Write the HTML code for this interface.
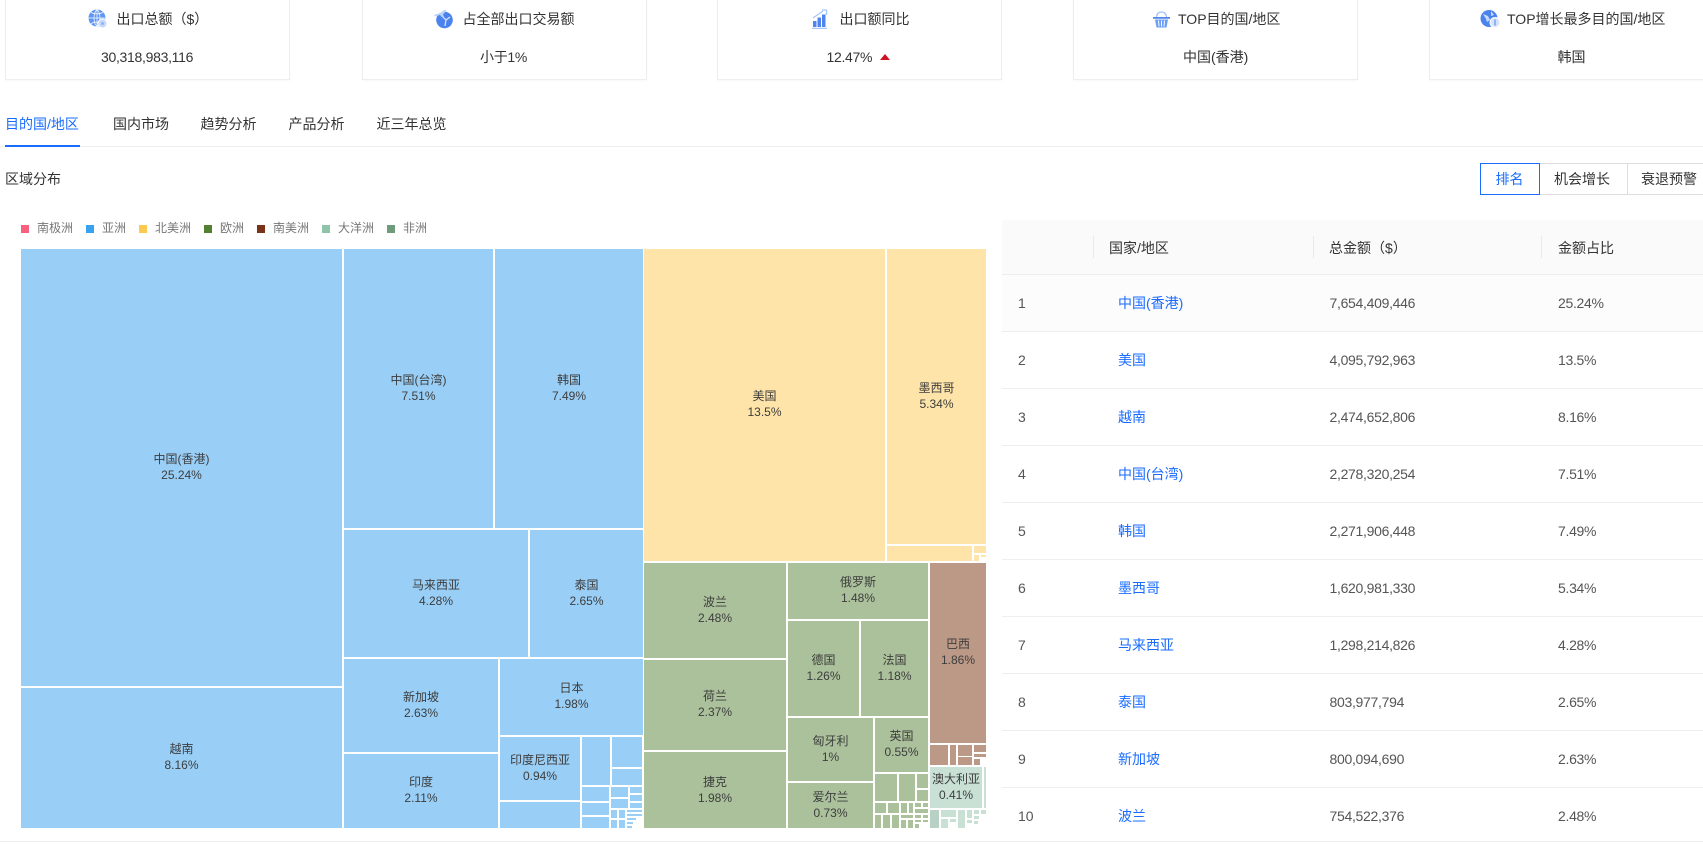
<!DOCTYPE html>
<html lang="zh"><head><meta charset="utf-8"><title>出口总览</title>
<style>
html,body{margin:0;padding:0;background:#fff}
body{width:1703px;height:842px;position:relative;overflow:hidden;font:14px/20px "Liberation Sans","Noto Sans CJK SC",sans-serif;color:#333}
.a{position:absolute;white-space:nowrap}
.n{letter-spacing:-.3px}
.card{position:absolute;top:-10px;height:88px;width:283px;border:1px solid #eee;box-shadow:0 1px 2px rgba(0,0,0,.03);background:#fff}
.b{position:absolute;top:163px;height:30px;border:1px solid #ddd;box-sizing:content-box;background:#fff}
.t{position:absolute;box-sizing:border-box;padding-bottom:2px;display:flex;flex-direction:column;align-items:center;justify-content:center;font-size:12px;line-height:16px;color:#3d3d3d;white-space:nowrap;overflow:hidden}
.as{background:#99cff7}.na{background:#fee4a8}.eu{background:#abc19b}.sa{background:#bc9987}.oc{background:#c8e1d4}
.l{position:absolute;top:225px;width:8px;height:8px}
.lt{position:absolute;top:219px;font-size:12px;line-height:18px;color:#777;white-space:nowrap}
.r{position:absolute;left:1002px;width:701px;height:56px;border-bottom:1px solid #eee}
.r span{position:absolute;top:18px;line-height:20px;white-space:nowrap;color:#555}
.r .k{left:16px}.r .c{left:116px;color:#1a6cff}.r .m{left:327.500px;letter-spacing:-.3px}.r .p{left:556px;letter-spacing:-.3px}
</style></head><body>

<div class="card" style="left:5px"></div>
<div class="card" style="left:362px"></div>
<div class="card" style="left:717px"></div>
<div class="card" style="left:1073px"></div>
<div class="card" style="left:1429px"></div>

<svg class="a" style="left:88px;top:9px" width="20" height="20" viewBox="0 0 20 20"><circle cx="9" cy="9" r="8.500" fill="#5f95f3"/><path d="M.5 9h17M9 .5v17M3 3.500c4 2 8 2 12 0M3 14.500c4-2 8-2 12 0M9 .5C5 4 5 14 9 17.500M9 .5c4 3.500 4 13.500 0 17" stroke="#fff" stroke-width=".7" fill="none"/><circle cx="14.500" cy="14.500" r="4.500" fill="#c4d9fb" stroke="#fff"/><circle cx="14.500" cy="14.500" r="1.500" fill="#8fb5f8"/></svg>
<div class="a" style="left:116.500px;top:9px">出口总额（$）</div>
<div class="a n" style="left:101px;top:47px">30,318,983,116</div>

<svg class="a" style="left:434px;top:9px" width="20" height="20" viewBox="0 0 20 20"><circle cx="10.500" cy="11" r="8.300" fill="#4a82ee"/><path d="M9 8l3 3-1 6M12 11l4-3" stroke="#dfe9fd" stroke-width="1.200" fill="none"/><path d="M0 6l6-2 5-3.500 1.500 1L9 5.500l1 2.500-2.200.2L6 6 1 7.500z" fill="#bcd3fa"/></svg>
<div class="a" style="left:462.500px;top:9px">占全部出口交易额</div>
<div class="a n" style="left:480px;top:47px">小于1%</div>

<svg class="a" style="left:811px;top:9px" width="20" height="20" viewBox="0 0 20 20"><path d="M2 12h3.500v6H2zM6.500 8.500H10V18H6.500zM11 5.500h3.500V18H11z" fill="#4f86ee"/><path d="M1 19.500h15" stroke="#a9c6fa" stroke-width="1.500"/><path d="M2 9l10-7" stroke="#a9c6fa" stroke-width="1.300" fill="none"/><path d="M15.500 6V1H11" stroke="#a9c6fa" stroke-width="1.300" fill="none"/></svg>
<div class="a" style="left:839.500px;top:9px">出口额同比</div>
<div class="a n" style="left:826.500px;top:47px">12.47%</div>
<div class="a" style="left:880px;top:54px;width:0;height:0;border-left:5px solid transparent;border-right:5px solid transparent;border-bottom:6px solid #cf1322"></div>

<svg class="a" style="left:1152px;top:11px" width="19" height="17" viewBox="0 0 19 17"><path d="M4.500 6C5 2 7 1 9.500 1s4.500 1 5 5" stroke="#9fbff8" stroke-width="1.200" fill="none"/><path d="M1 6h17v1.800H1z" fill="#4f86ee"/><path d="M3 8.500h13l-1.500 8h-10z" fill="#6d9ef5"/><path d="M6.500 9.500l.5 6M9.500 9.500v6M12.500 9.500l-.5 6" stroke="#fff" stroke-width="1"/></svg>
<div class="a" style="left:1178px;top:9px">TOP目的国/地区</div>
<div class="a" style="left:1183px;top:47px">中国(香港)</div>

<svg class="a" style="left:1480px;top:9px" width="21" height="20" viewBox="0 0 21 20"><circle cx="9" cy="9.500" r="8.500" fill="#4a82ee"/><path d="M3 5l5 2 2 4-3 2-1-3zM11 2l3 4-3 1z" fill="#c7dafb"/><circle cx="15" cy="13.500" r="5" fill="#d5e3fc" stroke="#fff"/><path d="M15 10.500v6" stroke="#6d9ef5" stroke-width="1.400"/></svg>
<div class="a" style="left:1507px;top:9px">TOP增长最多目的国/地区</div>
<div class="a" style="left:1557.500px;top:47px">韩国</div>

<!-- tabs -->
<div class="a" style="left:0;top:146px;width:1703px;height:1px;background:#eee"></div>
<div class="a" style="left:5px;top:145px;width:75px;height:2px;background:#1a6cff"></div>
<div class="a" style="left:5px;top:114px;color:#1a6cff">目的国/地区</div>
<div class="a" style="left:113px;top:114px">国内市场</div>
<div class="a" style="left:200.500px;top:114px">趋势分析</div>
<div class="a" style="left:288.500px;top:114px">产品分析</div>
<div class="a" style="left:376.500px;top:114px">近三年总览</div>

<div class="a" style="left:5px;top:169px">区域分布</div>
<div class="b" style="left:1590px;width:130px"></div>
<div class="b" style="left:1539px;width:87px"></div>
<div class="b" style="left:1480px;width:58px;border-color:#1a6cff"></div>
<div class="a" style="left:1495.500px;top:169px;color:#1a6cff">排名</div>
<div class="a" style="left:1554px;top:169px">机会增长</div>
<div class="a" style="left:1641px;top:169px">衰退预警</div>

<!-- legend -->
<div class="l" style="left:21px;background:#f7617f"></div><div class="lt" style="left:37px">南极洲</div>
<div class="l" style="left:85.500px;background:#37a2f0"></div><div class="lt" style="left:102px">亚洲</div>
<div class="l" style="left:139px;background:#fdc94f"></div><div class="lt" style="left:155px">北美洲</div>
<div class="l" style="left:204px;background:#558034"></div><div class="lt" style="left:220px">欧洲</div>
<div class="l" style="left:257px;background:#7a3319"></div><div class="lt" style="left:273px">南美洲</div>
<div class="l" style="left:322px;background:#90c4a9"></div><div class="lt" style="left:338px">大洋洲</div>
<div class="l" style="left:387px;background:#6d9b7b"></div><div class="lt" style="left:403px">非洲</div>

<!-- treemap -->
<div class="t as" style="left:21px;top:249px;width:321px;height:437px">中国(香港)<span>25.24%</span></div>
<div class="t as" style="left:21px;top:688px;width:321px;height:140px">越南<span>8.16%</span></div>
<div class="t as" style="left:344px;top:249px;width:149px;height:279px">中国(台湾)<span>7.51%</span></div>
<div class="t as" style="left:495px;top:249px;width:148px;height:279px">韩国<span>7.49%</span></div>
<div class="t as" style="left:344px;top:530px;width:184px;height:127px">马来西亚<span>4.28%</span></div>
<div class="t as" style="left:530px;top:530px;width:113px;height:127px">泰国<span>2.65%</span></div>
<div class="t as" style="left:344px;top:659px;width:154px;height:93px">新加坡<span>2.63%</span></div>
<div class="t as" style="left:344px;top:754px;width:154px;height:74px">印度<span>2.11%</span></div>
<div class="t as" style="left:500px;top:659px;width:143px;height:76px">日本<span>1.98%</span></div>
<div class="t as" style="left:500px;top:737px;width:80px;height:63px">印度尼西亚<span>0.94%</span></div>
<div class="t na" style="left:644px;top:249px;width:241px;height:312px">美国<span>13.5%</span></div>
<div class="t na" style="left:887px;top:249px;width:99px;height:295px">墨西哥<span>5.34%</span></div>
<div class="t eu" style="left:644px;top:563px;width:142px;height:95px">波兰<span>2.48%</span></div>
<div class="t eu" style="left:644px;top:660px;width:142px;height:90px">荷兰<span>2.37%</span></div>
<div class="t eu" style="left:644px;top:752px;width:142px;height:76px;padding-bottom:0">捷克<span>1.98%</span></div>
<div class="t eu" style="left:788px;top:563px;width:140px;height:56px">俄罗斯<span>1.48%</span></div>
<div class="t eu" style="left:788px;top:621px;width:71px;height:95px">德国<span>1.26%</span></div>
<div class="t eu" style="left:861px;top:621px;width:67px;height:95px">法国<span>1.18%</span></div>
<div class="t eu" style="left:788px;top:718px;width:85px;height:63px">匈牙利<span>1%</span></div>
<div class="t eu" style="left:875px;top:718px;width:53px;height:54px">英国<span>0.55%</span></div>
<div class="t eu" style="left:788px;top:783px;width:85px;height:45px">爱尔兰<span>0.73%</span></div>
<div class="t sa" style="left:930px;top:563px;width:56px;height:180px">巴西<span>1.86%</span></div>
<div class="t oc" style="left:930px;top:767px;width:52px;height:41px">澳大利亚<span>0.41%</span></div>

<svg class="a" style="left:0;top:0" width="1000" height="842">
<g fill="#99cff7">
<rect x="500" y="802" width="80" height="26"/>
<rect x="582" y="737" width="28" height="48"/>
<rect x="612" y="737" width="30" height="30"/>
<rect x="612" y="769" width="30" height="16"/>
<rect x="582" y="787" width="27" height="14"/>
<rect x="582" y="803" width="27" height="12"/>
<rect x="582" y="817" width="27" height="11"/>
<rect x="611" y="787" width="17" height="10"/>
<rect x="611" y="799" width="17" height="9"/>
<rect x="630" y="787" width="12" height="6"/>
<rect x="630" y="795" width="12" height="6"/>
<rect x="630" y="803" width="12" height="5"/>
<rect x="611" y="810" width="6" height="8"/>
<rect x="611" y="820" width="6" height="8"/>
<rect x="619" y="810" width="6" height="8"/>
<rect x="619" y="820" width="6" height="8"/>
<rect x="627" y="810" width="15" height="2"/>
<rect x="627" y="814" width="15" height="2"/>
<rect x="627" y="818" width="9" height="2"/>
<rect x="627" y="822" width="6" height="2"/>
<rect x="627" y="826" width="5" height="2"/>
</g>
<g fill="#fee4a8">
<rect x="887" y="546" width="85" height="15"/>
<rect x="974" y="546" width="12" height="7"/>
<rect x="974" y="555" width="5" height="6"/>
<rect x="981" y="555" width="5" height="2"/>
</g>
<g fill="#abc19b">
<rect x="875" y="774" width="22" height="27"/>
<rect x="899" y="774" width="16" height="27"/>
<rect x="917" y="774" width="11" height="14"/>
<rect x="917" y="790" width="11" height="11"/>
<rect x="875" y="803" width="11" height="10"/>
<rect x="888" y="803" width="11" height="10"/>
<rect x="901" y="803" width="6" height="10"/>
<rect x="909" y="803" width="4" height="10"/>
<rect x="915" y="803" width="6" height="4"/>
<rect x="923" y="803" width="5" height="4"/>
<rect x="915" y="809" width="13" height="4"/>
<rect x="875" y="815" width="6" height="13"/>
<rect x="883" y="815" width="7" height="13"/>
<rect x="892" y="815" width="7" height="13"/>
<rect x="901" y="815" width="12" height="3"/>
<rect x="901" y="820" width="5" height="8"/>
<rect x="908" y="820" width="5" height="8"/>
<rect x="915" y="815" width="6" height="3"/>
<rect x="923" y="815" width="5" height="3"/>
<rect x="915" y="820" width="6" height="2"/>
<rect x="923" y="820" width="5" height="2"/>
<rect x="915" y="824" width="4" height="4"/>
</g>
<g fill="#bc9987">
<rect x="930" y="745" width="18" height="20"/>
<rect x="950" y="745" width="6" height="20"/>
<rect x="958" y="745" width="14" height="11"/>
<rect x="958" y="757" width="14" height="8"/>
<rect x="974" y="745" width="12" height="7"/>
<rect x="974" y="754" width="12" height="3"/>
<rect x="974" y="759" width="6" height="6"/>
</g>
<g fill="#c8e1d4">
<rect x="984" y="767" width="2" height="41"/>
<rect x="941" y="810" width="15" height="7"/>
<rect x="941" y="819" width="7" height="9"/>
<rect x="950" y="819" width="6" height="3"/>
<rect x="958" y="810" width="7" height="18"/>
<rect x="967" y="810" width="5" height="8"/>
<rect x="974" y="810" width="5" height="4"/>
<rect x="981" y="810" width="5" height="4"/>
<rect x="974" y="816" width="5" height="3"/>
<rect x="967" y="820" width="5" height="3"/>
<rect x="974" y="821" width="4" height="3"/>
</g>
<rect x="930" y="810" width="9" height="18" fill="#b9d0c4"/>
</svg>

<!-- table -->
<div class="a" style="left:1002px;top:220px;width:701px;height:54px;background:#fafafa;border-bottom:1px solid #eee"></div>
<div class="a" style="left:1093px;top:236px;width:1px;height:22px;background:#eaeaea"></div>
<div class="a" style="left:1313px;top:236px;width:1px;height:22px;background:#eaeaea"></div>
<div class="a" style="left:1541px;top:236px;width:1px;height:22px;background:#eaeaea"></div>
<div class="a" style="left:1109px;top:238px">国家/地区</div>
<div class="a" style="left:1329px;top:238px">总金额（$）</div>
<div class="a" style="left:1558px;top:238px">金额占比</div>

<div class="r" style="top:275px;background:#fcfcfc"><span class="k">1</span><span class="c">中国(香港)</span><span class="m">7,654,409,446</span><span class="p">25.24%</span></div>
<div class="r" style="top:332px"><span class="k">2</span><span class="c">美国</span><span class="m">4,095,792,963</span><span class="p">13.5%</span></div>
<div class="r" style="top:389px"><span class="k">3</span><span class="c">越南</span><span class="m">2,474,652,806</span><span class="p">8.16%</span></div>
<div class="r" style="top:446px"><span class="k">4</span><span class="c">中国(台湾)</span><span class="m">2,278,320,254</span><span class="p">7.51%</span></div>
<div class="r" style="top:503px"><span class="k">5</span><span class="c">韩国</span><span class="m">2,271,906,448</span><span class="p">7.49%</span></div>
<div class="r" style="top:560px"><span class="k">6</span><span class="c">墨西哥</span><span class="m">1,620,981,330</span><span class="p">5.34%</span></div>
<div class="r" style="top:617px"><span class="k">7</span><span class="c">马来西亚</span><span class="m">1,298,214,826</span><span class="p">4.28%</span></div>
<div class="r" style="top:674px"><span class="k">8</span><span class="c">泰国</span><span class="m">803,977,794</span><span class="p">2.65%</span></div>
<div class="r" style="top:731px"><span class="k">9</span><span class="c">新加坡</span><span class="m">800,094,690</span><span class="p">2.63%</span></div>
<div class="r" style="top:788px;border:0"><span class="k">10</span><span class="c">波兰</span><span class="m">754,522,376</span><span class="p">2.48%</span></div>

<div class="a" style="left:0;top:841px;width:1703px;height:1px;background:#eee"></div>
</body></html>
